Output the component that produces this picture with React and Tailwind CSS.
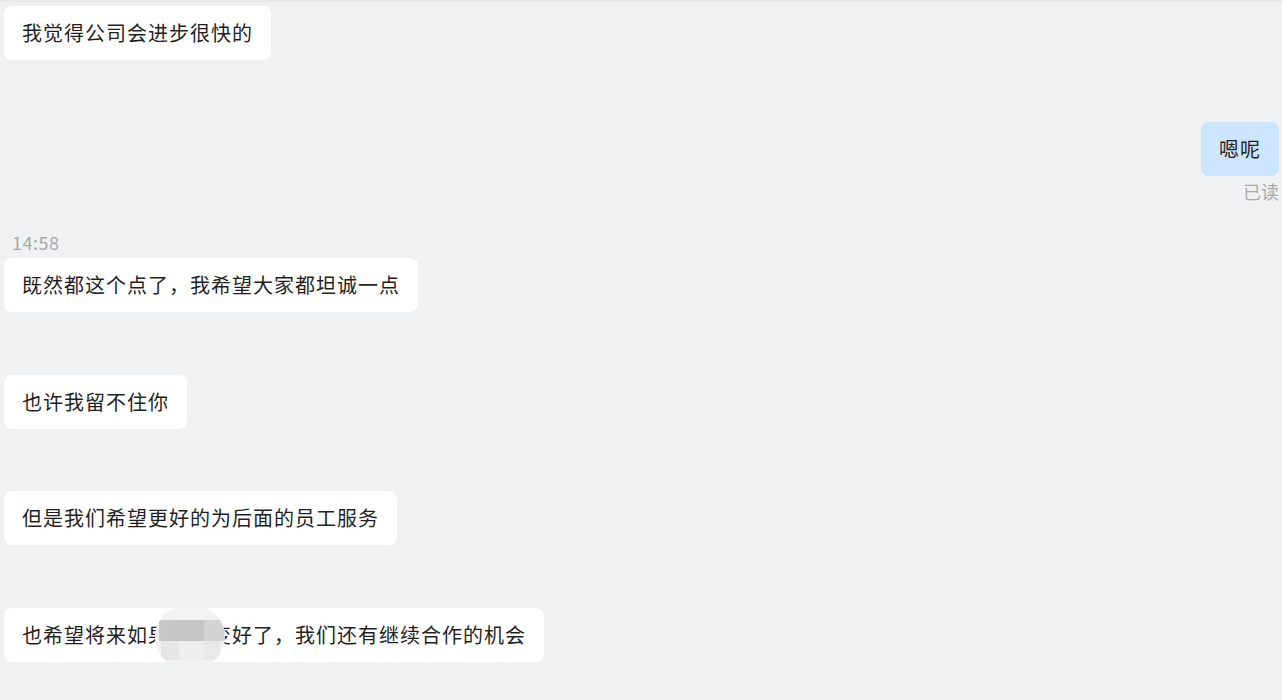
const font = { fontFamily: '"Microsoft YaHei", "Noto Sans CJK SC", "Noto Sans", sans-serif' }

function Bubble({ text, mine, children }) {
  return (
    <div
      className={`relative inline-flex items-center h-[54px] px-[18px] rounded-lg text-[20px] tracking-[1px] text-[#1f1f1f] ${
        mine ? 'bg-[#cce5ff]' : 'bg-white'
      }`}
    >
      {text}
      {children}
    </div>
  )
}

function Mosaic() {
  return (
    <div className="absolute left-[151px] top-[-2px] w-[70px] h-[62px] rounded-full bg-[#f2f2f2] overflow-hidden">
      <div className="flex mt-[14px] h-[21px]">
        <div className="w-[4px] bg-[#f2f2f2]" />
        <div className="w-[10px] bg-[#c8c8c8]" />
        <div className="w-[35px] bg-[#c5c5c5]" />
        <div className="w-[20px] bg-[#d2d3d3]" />
      </div>
      <div className="flex h-[19px]">
        <div className="w-[6px]" />
        <div className="w-[18px] bg-[#e6e6e6]" />
        <div className="w-[25px] bg-[#efefef]" />
        <div className="w-[16px] bg-[#e9e9e9]" />
      </div>
    </div>
  )
}

export default function App() {
  return (
    <div className="w-[1282px] h-[700px] bg-[#f0f1f3] border-t-2 border-[#e7e8ea] overflow-hidden" style={font}>
      <div className="flex flex-col pl-[4px] pr-[3px] pt-[4px]">
        <div>
          <Bubble text="我觉得公司会进步很快的" />
        </div>

        <div className="flex flex-col items-end mt-[62px]">
          <Bubble text="嗯呢" mine />
          <span className="mt-[3px] text-[18px] text-[#a9a9a9] leading-[24px]">已读</span>
        </div>

        <div className="mt-[28px] pl-[8px] text-[18px] tracking-[0.5px] text-[#a9a9a9] leading-[22px]">14:58</div>
        <div className="mt-[5px]">
          <Bubble text="既然都这个点了，我希望大家都坦诚一点" />
        </div>

        <div className="mt-[63px]">
          <Bubble text="也许我留不住你" />
        </div>

        <div className="mt-[62px]">
          <Bubble text="但是我们希望更好的为后面的员工服务" />
        </div>

        <div className="mt-[63px]">
          <Bubble text="也希望将来如果公司变好了，我们还有继续合作的机会">
            <Mosaic />
          </Bubble>
        </div>
      </div>
    </div>
  )
}
